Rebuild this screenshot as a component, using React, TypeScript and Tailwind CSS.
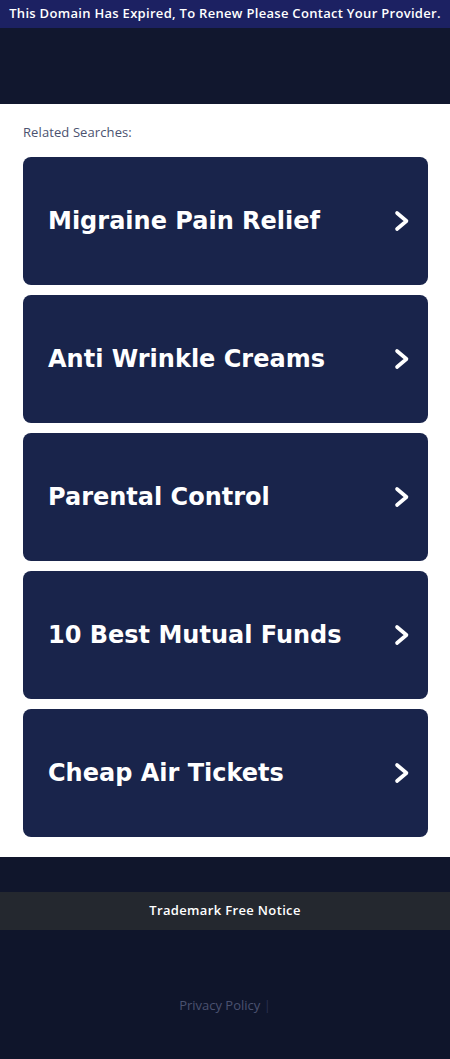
import React from "react";

const items = [
  "Migraine Pain Relief",
  "Anti Wrinkle Creams",
  "Parental Control",
  "10 Best Mutual Funds",
  "Cheap Air Tickets",
];

function Chevron() {
  return (
    <svg width="16" height="22" viewBox="0 0 16 22" fill="none" className="shrink-0">
      <path d="M3 3 L12.5 11 L3 19" stroke="white" strokeWidth="3.6" strokeLinecap="round" strokeLinejoin="round" />
    </svg>
  );
}

export default function App() {
  return (
    <div className="w-[450px] min-h-[1059px] bg-[#0f152b] flex flex-col">
      <div className="h-[28px] bg-[#1c2162] flex items-center justify-center text-white text-[13px] font-semibold tracking-[0.3px] [font-family:'Open_Sans',sans-serif] whitespace-nowrap">
        This Domain Has Expired, To Renew Please Contact Your Provider.
      </div>
      <div className="h-[76px] bg-[#11172e]" />
      <div className="bg-white pl-[23px] pr-[22px] pt-[16px] pb-[20px]">
        <div className="text-[13px] text-[#4b5270] h-[24px] leading-[24px] [font-family:'Open_Sans',sans-serif] font-medium tracking-[0.1px]">
          Related Searches:
        </div>
        <div className="mt-[13px] flex flex-col gap-[10px]">
          {items.map((t) => (
            <div
              key={t}
              className="h-[128px] rounded-[8px] bg-[#19244b] flex items-center justify-between pl-[25px] pr-[18px]"
            >
              <span className="text-white text-[24px] font-bold [font-family:'DejaVu_Sans',sans-serif]">
                {t}
              </span>
              <Chevron />
            </div>
          ))}
        </div>
      </div>
      <div className="h-[35px] bg-[#10162c]" />
      <div className="h-[38px] bg-[#24282f] flex items-center justify-center text-white text-[13px] font-semibold tracking-[0.35px] [font-family:'Open_Sans',sans-serif]">
        Trademark Free Notice
      </div>
      <div className="flex-1 bg-[#0f152b] flex justify-center pt-[66px]">
        <div className="text-[13px] text-[#4b5270] [font-family:'Open_Sans',sans-serif] h-[18px] leading-[18px]">
          Privacy Policy <span className="text-[#2a3050]">|</span>
        </div>
      </div>
    </div>
  );
}
